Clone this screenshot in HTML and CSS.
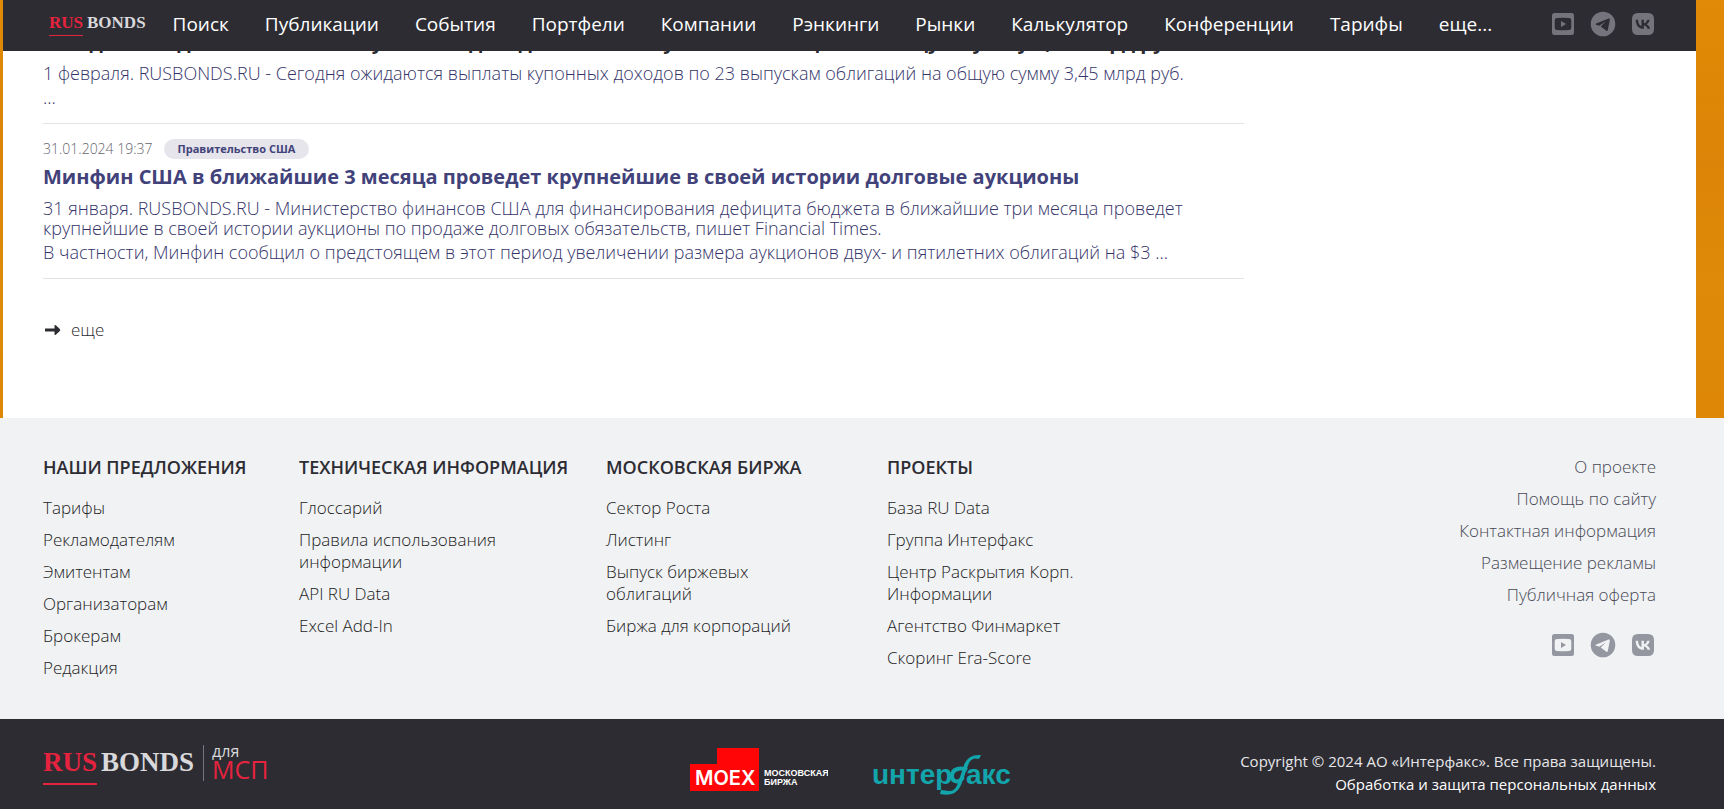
FILE: index.html
```html
<!DOCTYPE html>
<html lang="ru">
<head>
<meta charset="utf-8">
<meta name="viewport" content="width=device-width, initial-scale=1">
<title>RUSBONDS</title>
<link rel="stylesheet" href="styles.css">
</head>
<body>
<svg class="sprite" aria-hidden="true">
  <symbol id="youtube" viewBox="0 0 26 26">
    <path fill-rule="evenodd" d="M4.500 2h17a2.500 2.500 0 0 1 2.500 2.500v17a2.500 2.500 0 0 1-2.500 2.500h-17A2.500 2.500 0 0 1 2 21.500v-17A2.500 2.500 0 0 1 4.500 2zM7 7q-2.300.1-2.300 2.300v7.400Q4.700 19 7 19q6 .5 12 0 2.300-.1 2.300-2.300V9.300Q21.300 7 19 7q-6-.5-12 0zM11 10l5 3-5 3z"/>
  </symbol>
  <symbol id="telegram" viewBox="0 0 26 26">
    <path fill-rule="evenodd" d="M13 .7a12.300 12.300 0 1 1 0 24.600A12.300 12.300 0 0 1 13 .7zM18.600 7.600 6.200 12.500c-1 .4-.9 1 0 1.200l3 1 6.500-4.300-5 5.100 5.700 4.200c.7.400 1.200.2 1.400-.7l2-10.100c.2-1.200-.4-1.700-1.200-1.300z"/>
  </symbol>
  <symbol id="vk" viewBox="0 0 26 26">
    <path fill-rule="evenodd" d="M8 2h10q6 0 6 6v10q0 6-6 6H8q-6 0-6-6V8q0-6 6-6zM5.700 8.700c.1 5.700 3 9.100 7.900 9.100h.3v-3.300c1.800.2 3.100 1.500 3.700 3.300h2.600c-.7-2.500-2.500-3.900-3.700-4.500 1.100-.6 2.800-2.200 3.100-4.600h-2.300c-.5 1.800-2 3.500-3.400 3.600V8.700h-2.400V15c-1.500-.4-3.300-2.100-3.400-6.300z"/>
  </symbol>
</svg>

<header class="topbar">
  <a class="brand" href="#"><span class="brand-rus">RUS</span><span class="brand-bonds">BONDS</span></a>
  <nav class="nav">
    <a href="#">Поиск</a>
    <a href="#">Публикации</a>
    <a href="#">События</a>
    <a href="#">Портфели</a>
    <a href="#">Компании</a>
    <a href="#">Рэнкинги</a>
    <a href="#">Рынки</a>
    <a href="#">Калькулятор</a>
    <a href="#">Конференции</a>
    <a href="#">Тарифы</a>
    <a href="#">еще...</a>
  </nav>
  <div class="social">
    <a href="#" aria-label="YouTube"><svg><use href="#youtube"/></svg></a>
    <a href="#" aria-label="Telegram"><svg><use href="#telegram"/></svg></a>
    <a href="#" aria-label="VK"><svg><use href="#vk"/></svg></a>
  </div>
</header>

<main class="page">
  <div class="news">
    <article class="item">
      <h2><a class="visited" href="#">Сегодня ожидаются выплаты купонных доходов по 23 выпускам облигаций на общую сумму 3,45 млрд руб.</a></h2>
      <p>1 февраля. RUSBONDS.RU - Сегодня ожидаются выплаты купонных доходов по 23 выпускам облигаций на общую сумму 3,45 млрд руб.</p>
      <p>...</p>
    </article>
    <article class="item">
      <div class="meta"><time>31.01.2024 19:37</time><a class="tag" href="#">Правительство США</a></div>
      <h2><a href="#">Минфин США в ближайшие 3 месяца проведет крупнейшие в своей истории долговые аукционы</a></h2>
      <p>31 января. RUSBONDS.RU - Министерство финансов США для финансирования дефицита бюджета в ближайшие три месяца проведет крупнейшие в своей истории аукционы по продаже долговых обязательств, пишет Financial Times.</p>
      <p>В частности, Минфин сообщил о предстоящем в этот период увеличении размера аукционов двух- и пятилетних облигаций на $3 ...</p>
    </article>
    <a class="more" href="#"><svg viewBox="0 0 18 12" aria-hidden="true"><path d="M2 4.500h9.500V2q0-1.500 1.300-.7l4 3.800q1 .9 0 1.800l-4 3.800q-1.300.8-1.300-.7V7.500H2z"/></svg>еще</a>
  </div>
</main>

<footer>
  <div class="links">
    <section>
      <h3>НАШИ ПРЕДЛОЖЕНИЯ</h3>
      <ul>
        <li><a href="#">Тарифы</a></li>
        <li><a href="#">Рекламодателям</a></li>
        <li><a href="#">Эмитентам</a></li>
        <li><a href="#">Организаторам</a></li>
        <li><a href="#">Брокерам</a></li>
        <li><a href="#">Редакция</a></li>
      </ul>
    </section>
    <section>
      <h3>ТЕХНИЧЕСКАЯ ИНФОРМАЦИЯ</h3>
      <ul>
        <li><a href="#">Глоссарий</a></li>
        <li><a href="#">Правила использования информации</a></li>
        <li><a href="#">API RU Data</a></li>
        <li><a href="#">Excel Add-In</a></li>
      </ul>
    </section>
    <section>
      <h3>МОСКОВСКАЯ БИРЖА</h3>
      <ul>
        <li><a href="#">Сектор Роста</a></li>
        <li><a href="#">Листинг</a></li>
        <li><a href="#">Выпуск биржевых облигаций</a></li>
        <li><a href="#">Биржа для корпораций</a></li>
      </ul>
    </section>
    <section>
      <h3>ПРОЕКТЫ</h3>
      <ul>
        <li><a href="#">База RU Data</a></li>
        <li><a href="#">Группа Интерфакс</a></li>
        <li><a href="#">Центр Раскрытия Корп. Информации</a></li>
        <li><a href="#">Агентство Финмаркет</a></li>
        <li><a href="#">Скоринг Era-Score</a></li>
      </ul>
    </section>
    <section class="about">
      <ul>
        <li><a href="#">О проекте</a></li>
        <li><a href="#">Помощь по сайту</a></li>
        <li><a href="#">Контактная информация</a></li>
        <li><a href="#">Размещение рекламы</a></li>
        <li><a href="#">Публичная оферта</a></li>
      </ul>
      <div class="social">
        <a href="#" aria-label="YouTube"><svg><use href="#youtube"/></svg></a>
        <a href="#" aria-label="Telegram"><svg><use href="#telegram"/></svg></a>
        <a href="#" aria-label="VK"><svg><use href="#vk"/></svg></a>
      </div>
    </section>
  </div>

  <div class="bottom">
    <div class="msp">
      <a class="brand brand-large" href="#"><span class="brand-rus">RUS</span><span class="brand-bonds">BONDS</span></a>
      <a class="msp-label" href="#"><span>для</span><strong>МСП</strong></a>
    </div>
    <div class="partners">
      <a href="#" aria-label="MOEX Московская биржа">
        <svg width="138" height="50" viewBox="0 0 138 50">
          <path fill="#ff0508" d="M0 16h27V0h42v43H0z"/>
          <text class="moex" x="5" y="37">MOEX</text>
          <text class="moex-name" x="74" y="28">МОСКОВСКАЯ</text>
          <text class="moex-name" x="74" y="37">БИРЖА</text>
        </svg>
      </a>
      <a href="#" aria-label="Интерфакс">
        <svg width="138" height="50" viewBox="0 0 138 50">
          <text class="ifax" x="0" y="36">uнтер</text>
          <text class="ifax" x="94" y="36">акс</text>
          <path fill="none" stroke="#12a5ab" stroke-width="4" d="M95 22c-7-3-15-1-15 6 0 6 7 8 11 1"/>
          <path fill="#12a5ab" d="M109 7q-13-1-17 10l-6 18q-3 9-9 8l-8-1-1 4q15 3 20-7 3-6 6-16l3-8q3-6 10-4z"/>
        </svg>
      </a>
    </div>
    <div class="legal">
      <p>Copyright © 2024 АО «Интерфакс». Все права защищены.</p>
      <a href="#">Обработка и защита персональных данных</a>
    </div>
  </div>
</footer>
</body>
</html>
```

FILE: styles.css
```css
* {
  box-sizing: border-box;
}

body {
  margin: 0;
  font-family: "Open Sans", "Noto Sans", sans-serif;
  font-size: 17px;
  color: #2d2c33;
  background: linear-gradient(#e08a06, #dc8407 20%, #df8a08 35%, #db7d05);
}

a {
  color: inherit;
  text-decoration: none;
}

h2, h3, p, ul {
  margin: 0;
  padding: 0;
}

ul {
  list-style: none;
}

.sprite {
  display: none;
}

.topbar {
  position: fixed;
  top: 0;
  left: 3px;
  right: 28px;
  z-index: 1;
  display: flex;
  align-items: center;
  height: 51px;
  padding: 0 40px 4px 46px;
  background: #2d2c33;
  color: #fff;
}

.brand {
  display: flex;
  gap: 4px;
  font: bold 17px/24px "Liberation Serif", serif;
}

.brand-rus {
  color: #e5233f;
  border-bottom: 1px solid #e5233f;
}

.brand-bonds {
  color: #d9d9db;
}

.nav {
  display: flex;
  gap: 36px;
  margin-left: 27px;
  font-size: 19px;
  line-height: 24px;
}

.social {
  display: flex;
  gap: 14px;
  color: #75747c;
}

.topbar .social {
  margin-left: auto;
}

.social svg {
  display: block;
  width: 26px;
  height: 26px;
  fill: currentColor;
}

.page {
  margin: 0 28px 0 3px;
  padding: 28px 40px 77px;
  background: #fff;
}

.news {
  max-width: 1201px;
}

.item {
  padding-bottom: 16px;
  margin-bottom: 15px;
  border-bottom: 1px solid #e2e3e6;
  color: #34346a;
}

.item h2 {
  font-size: 20px;
  line-height: 28px;
  font-weight: 700;
  color: #42427a;
  margin-bottom: 7px;
}

.item .visited {
  color: #2d2c33;
}

.item p {
  font-size: 18px;
  line-height: 20px;
  font-weight: 300;
  margin-bottom: 4px;
}

.item p:last-child {
  margin-bottom: 0;
}

.meta {
  display: flex;
  align-items: center;
  gap: 11px;
  margin-bottom: 4px;
  font-size: 14px;
  line-height: 20px;
  font-weight: 300;
  color: #65646c;
}

.tag {
  padding: 0 14px;
  border-radius: 10px;
  background: #e5e5eb;
  color: #42427a;
  font-size: 11px;
  font-weight: 700;
}

.more {
  display: inline-flex;
  align-items: center;
  gap: 10px;
  margin-top: 25px;
  font-weight: 300;
  line-height: 22px;
}

.more svg {
  width: 18px;
  height: 12px;
  fill: currentColor;
}

.links {
  display: grid;
  grid-template-columns: 256fr 307fr 281fr 400fr 369fr;
  padding: 37px 68px 40px 43px;
  background: #f0f2f4;
}

.links h3 {
  font-size: 18px;
  line-height: 24px;
  font-weight: 600;
  white-space: nowrap;
  margin-bottom: 18px;
}

.links ul {
  display: flex;
  flex-direction: column;
  gap: 10px;
  max-width: 200px;
  font-weight: 300;
  line-height: 22px;
  color: #1c1b22;
}

.links .about {
  display: flex;
  flex-direction: column;
  align-items: flex-end;
  gap: 26px;
  padding-top: 1px;
  text-align: right;
}

.links .about ul {
  max-width: none;
  color: #484954;
}

.about .social {
  color: #9496a0;
}

.bottom {
  display: grid;
  grid-template-columns: 1fr auto 1fr;
  align-items: start;
  min-height: 90px;
  padding: 22px 68px 10px 43px;
  background: #2d2c33;
  color: #fff;
}

.msp {
  display: flex;
  align-items: center;
  gap: 9px;
}

.brand-large {
  font-size: 27px;
  line-height: 42px;
}

.brand-large .brand-rus {
  border-bottom-width: 2px;
}

.msp-label {
  display: flex;
  flex-direction: column;
  padding-left: 8px;
  border-left: 1px solid #75747c;
  font-size: 16px;
  line-height: 12px;
  color: #d9d9db;
}

.msp-label strong {
  color: #e5233f;
  font-size: 25px;
  line-height: 24px;
  font-weight: 400;
}

.partners {
  display: flex;
  gap: 44px;
  padding-top: 7px;
}

.partners svg {
  display: block;
}

.moex {
  fill: #fff;
  font: 600 20px Inter, sans-serif;
}

.moex-name {
  fill: #fff;
  font: 700 9px "Liberation Sans", sans-serif;
}

.ifax {
  fill: #12a5ab;
  font: 700 28px "Liberation Sans", sans-serif;
}

.legal {
  padding-top: 9px;
  text-align: right;
  font-size: 15px;
  line-height: 23px;
}

.legal p {
  color: #e6e6e8;
}
```
